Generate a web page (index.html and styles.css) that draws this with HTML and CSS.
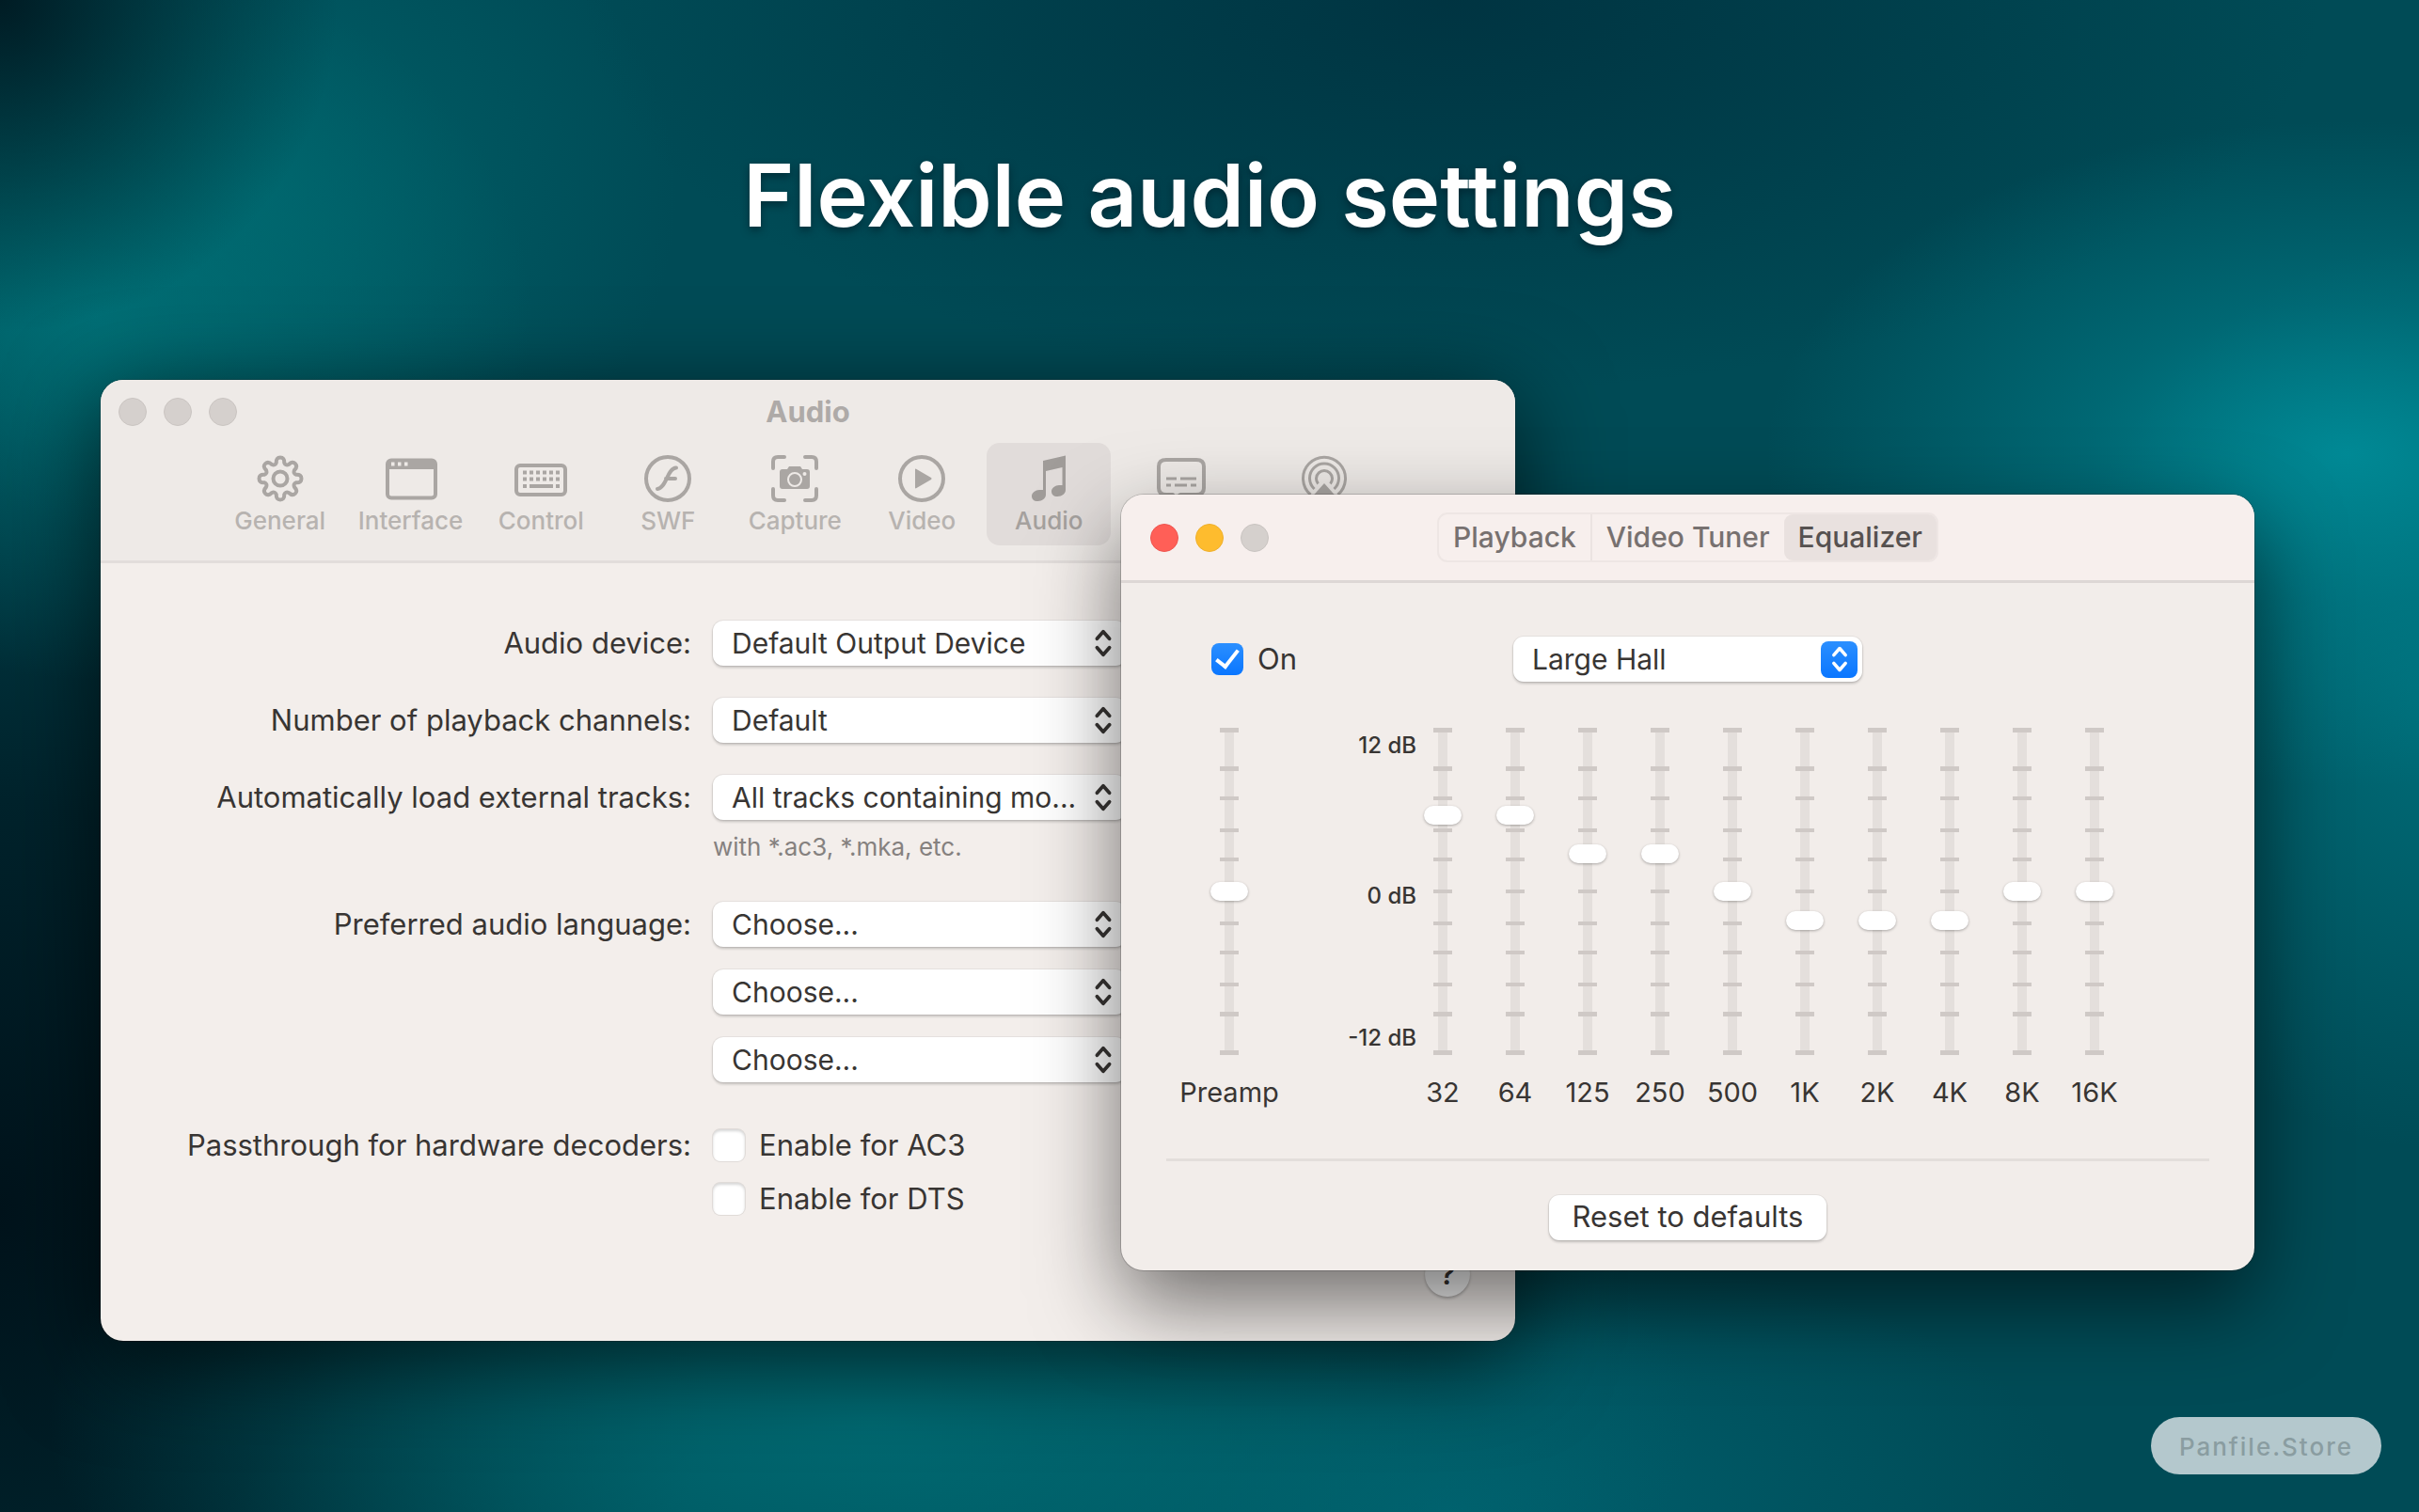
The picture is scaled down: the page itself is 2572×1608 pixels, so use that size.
FILE: index.html
```html
<!DOCTYPE html>
<html lang="en">
<head>
<meta charset="utf-8">
<title>Flexible audio settings</title>
<link rel="stylesheet" href="styles.css">
</head>
<body>
<svg class="sprite" aria-hidden="true">
  <symbol id="chevrons" viewBox="0 0 20 34">
    <path d="M3 12 10 4l7 8M3 22l7 8 7-8" fill="none" stroke="currentColor" stroke-width="4" stroke-linecap="round" stroke-linejoin="round"/>
  </symbol>
</svg>
<main class="desktop">
  <h1 class="headline">Flexible audio settings</h1>

  <section class="window prefs" aria-label="Audio preferences">
    <header class="prefs-header">
      <div class="titlebar">
        <div class="lights"><span class="light"></span><span class="light"></span><span class="light"></span></div>
        <h2 class="window-title">Audio</h2>
      </div>
      <nav class="toolbar">
        <button class="tool" type="button">
          <svg class="tool-icon" viewBox="-26 -26 52 52"><path class="line" d="M17-4.2Q22.500-4.500 22.500 0T17 4.2Q13.500 5.500 15 9 19 13 15.900 15.900T9 15Q5.500 13.500 4.2 17 4.500 22.500 0 22.500T-4.2 17Q-5.500 13.500-9 15-13 19-15.900 15.900T-15 9Q-13.500 5.500-17 4.2-22.500 4.500-22.500 0T-17-4.2Q-13.500-5.500-15-9-19-13-15.900-15.900T-9-15Q-5.500-13.500-4.2-17-4.500-22.500 0-22.500T4.2-17Q5.500-13.500 9-15 13-19 15.900-15.900T15-9Q13.500-5.500 17-4.2Z"/><circle class="line" r="7.5"/></svg>
          General
        </button>
        <button class="tool" type="button">
          <svg class="tool-icon wide" viewBox="-30 -26 60 52"><rect class="line" x="-25" y="-19.500" width="51" height="40" rx="4"/><path class="solid" d="M-25-19H26V-10H-25Z"/><path class="hole" d="M-21-17.500h3.500v4h-3.500zM-14-17.500h3.500v4h-3.500zM-7-17.500h3.500v4h-3.500z"/></svg>
          Interface
        </button>
        <button class="tool" type="button">
          <svg class="tool-icon wide" viewBox="-30 -26 60 52"><rect class="line" x="-26" y="-14" width="52" height="31" rx="4"/><path class="solid" d="M-19-8.500h4v4h-4zM-12-8.500h4v4h-4zM-5-8.500h4v4h-4zM2-8.500h4v4h-4zM9-8.500h4v4h-4zM16-8.500h4v4h-4zM-19-1.500h4v4h-4zM-12-1.500h4v4h-4zM-5-1.500h4v4h-4zM2-1.500h4v4h-4zM9-1.500h4v4h-4zM16-1.500h4v4h-4zM-19 6h4v4h-4zM-12 6h25v4h-25zM16 6h4v4h-4z"/></svg>
          Control
        </button>
        <button class="tool" type="button">
          <svg class="tool-icon" viewBox="-26 -26 52 52"><circle class="line" r="23"/><path class="line" stroke-linecap="round" d="M-11 11C-1 10-1-11 9-11.500M-2 0H8"/></svg>
          SWF
        </button>
        <button class="tool" type="button">
          <svg class="tool-icon" viewBox="-26 -26 52 52"><path class="line" stroke-linecap="round" d="M-23-11V-18Q-23-23-18-23H-11M11-23H18Q23-23 23-18V-11M23 11V18Q23 23 18 23H11M-11 23H-18Q-23 23-23 18V11"/><path class="solid" d="M-13-10h5l2-3H6l2 3h5q3 0 3 3V8q0 3-3 3H-13q-3 0-3-3V-7q0-3 3-3Z"/><circle cy="1" r="7" class="ring"/><circle class="hole" cx="10.500" cy="-5" r="2"/></svg>
          Capture
        </button>
        <button class="tool" type="button">
          <svg class="tool-icon" viewBox="-26 -26 52 52"><circle class="line" r="23"/><path class="solid" d="M-7-9.500Q-7-11-5.500-10L10-1Q11 0 10 1L-5.500 10Q-7 11-7 9.500Z"/></svg>
          Video
        </button>
        <button class="tool selected" type="button">
          <svg class="tool-icon" viewBox="-26 -26 52 52"><path class="solid" d="M-6-19 18-24.500V12C18 16 14 19 9.500 19S3 17 3 13.500 7 7 11 7H14.500V-12L-3-8V17C-3 21-7 24-11.500 24S-18 22-18 18.500-14 12-10 12H-6Z"/></svg>
          Audio
        </button>
        <button class="tool" type="button" aria-label="Subtitles">
          <svg class="tool-icon subtitles" viewBox="-30 -26 60 52"><path class="line" d="M-9 17H-16Q-24 17-24 10V-13Q-24-20-16-20H16Q24-20 24-13V10Q24 17 16 17H-1L-8 23Z"/><path class="thin" d="M-16 0h11M-1 0h17M-16 7h5M-7 7h13M10 7h6"/></svg>
        </button>
        <button class="tool" type="button" aria-label="AirPlay">
          <svg class="tool-icon airplay" viewBox="-26 -26 52 52"><path class="ring-line" d="M-14.500 17A22.500 22.500 0 1 1 14.500 17M-10.500 11A15.500 15.500 0 1 1 10.500 11M-6.500 5.500A8.500 8.500 0 1 1 6.500 5.500"/><path class="solid" d="M0 5 17 24H-17Z"/></svg>
        </button>
      </nav>
    </header>
    <form class="settings">
      <label class="caption" for="device">Audio device:</label>
      <span class="picker"><select id="device"><option>Default Output Device</option></select><svg class="picker-arrows"><use href="#chevrons"/></svg></span>

      <label class="caption" for="channels">Number of playback channels:</label>
      <span class="picker"><select id="channels"><option>Default</option></select><svg class="picker-arrows"><use href="#chevrons"/></svg></span>

      <label class="caption" for="tracks">Automatically load external tracks:</label>
      <div class="tracks">
        <span class="picker"><select id="tracks"><option>All tracks containing mo...</option></select><svg class="picker-arrows"><use href="#chevrons"/></svg></span>
        <p class="hint">with *.ac3, *.mka, etc.</p>
      </div>

      <label class="caption" for="lang1">Preferred audio language:</label>
      <div class="languages">
        <span class="picker"><select id="lang1"><option>Choose...</option></select><svg class="picker-arrows"><use href="#chevrons"/></svg></span>
        <span class="picker"><select aria-label="Second language"><option>Choose...</option></select><svg class="picker-arrows"><use href="#chevrons"/></svg></span>
        <span class="picker"><select aria-label="Third language"><option>Choose...</option></select><svg class="picker-arrows"><use href="#chevrons"/></svg></span>
      </div>

      <span class="caption">Passthrough for hardware decoders:</span>
      <div class="decoders">
        <label class="check"><input type="checkbox">Enable for AC3</label>
        <label class="check"><input type="checkbox">Enable for DTS</label>
      </div>
    </form>
    <footer class="prefs-footer"><button class="help" type="button">?</button></footer>
  </section>

  <section class="window tuner" aria-label="Equalizer">
    <header class="tuner-header">
      <div class="lights"><span class="light close"></span><span class="light minimize"></span><span class="light"></span></div>
      <nav class="tabs">
        <button class="tab" type="button">Playback</button>
        <button class="tab" type="button">Video Tuner</button>
        <button class="tab current" type="button">Equalizer</button>
      </nav>
    </header>
    <form class="equalizer">
      <div class="preset">
        <label class="check"><input type="checkbox" checked>On</label>
        <span class="picker"><select aria-label="Preset"><option>Large Hall</option></select><span class="picker-badge"><svg><use href="#chevrons"/></svg></span></span>
      </div>
      <div class="board">
        <label class="band preamp"><input type="range" min="-12" max="12" step="any" value="0">Preamp</label>
        <div class="scale"><span>12 dB</span><span>0 dB</span><span>-12 dB</span></div>
        <div class="bands">
          <label class="band"><input type="range" min="-12" max="12" step="any" value="5.900">32</label>
          <label class="band"><input type="range" min="-12" max="12" step="any" value="5.900">64</label>
          <label class="band"><input type="range" min="-12" max="12" step="any" value="2.900">125</label>
          <label class="band"><input type="range" min="-12" max="12" step="any" value="2.900">250</label>
          <label class="band"><input type="range" min="-12" max="12" step="any" value="0">500</label>
          <label class="band"><input type="range" min="-12" max="12" step="any" value="-2.300">1K</label>
          <label class="band"><input type="range" min="-12" max="12" step="any" value="-2.300">2K</label>
          <label class="band"><input type="range" min="-12" max="12" step="any" value="-2.300">4K</label>
          <label class="band"><input type="range" min="-12" max="12" step="any" value="0">8K</label>
          <label class="band"><input type="range" min="-12" max="12" step="any" value="0">16K</label>
        </div>
      </div>
      <hr class="divider">
      <button class="reset" type="reset">Reset to defaults</button>
    </form>
  </section>

  <a class="store" href="#">Panfile.Store</a>
</main>
</body>
</html>
```

FILE: styles.css
```css
* {
  box-sizing: border-box;
}

body {
  margin: 0;
  font: 400 31px/36px Inter, "Liberation Sans", sans-serif;
  color: #383533;
}

button,
select,
input {
  margin: 0;
  font: inherit;
  color: inherit;
}

.sprite {
  display: none;
}

.desktop {
  position: relative;
  min-height: 100vh;
  overflow: hidden;
  background:
    radial-gradient(ellipse 24% 22% at 97% 30%, rgba(0, 142, 154, 0.9), rgba(0, 132, 144, 0.5) 45%, transparent),
    radial-gradient(ellipse 16% 30% at 101% 46%, rgba(0, 124, 136, 0.7), transparent),
    radial-gradient(ellipse 14% 22% at 0% 0%, rgba(0, 22, 30, 0.9), rgba(0, 24, 32, 0.5) 45%, transparent),
    radial-gradient(ellipse 18% 24% at 10% 13%, rgba(0, 112, 118, 0.6), transparent),
    radial-gradient(ellipse 18% 24% at 4% 21%, rgba(0, 118, 124, 0.8), rgba(0, 112, 118, 0.45) 45%, transparent),
    radial-gradient(ellipse 36% 26% at 60% 0%, rgba(0, 48, 62, 0.85), rgba(0, 48, 62, 0.45) 50%, transparent),
    radial-gradient(ellipse 34% 24% at 36% 94%, rgba(0, 108, 116, 0.9), rgba(0, 102, 110, 0.6) 45%, transparent),
    radial-gradient(ellipse 26% 18% at 60% 100%, rgba(0, 98, 112, 0.9), transparent),
    radial-gradient(ellipse 30% 60% at 0% 80%, rgba(0, 16, 24, 0.95), rgba(0, 18, 26, 0.7) 45%, transparent),
    #004b56;
}

.headline {
  margin: 0;
  padding-top: 150px;
  font-size: 92px;
  line-height: 116px;
  font-weight: 600;
  text-align: center;
  color: #fff;
  text-shadow: 0 4px 8px rgba(0, 20, 30, 0.5);
}

.window {
  position: absolute;
  border-radius: 24px;
  overflow: hidden;
}

.prefs {
  left: 107px;
  top: 404px;
  width: 1504px;
  background: #f3eeeb;
  box-shadow: 0 0 0 1px rgba(0, 0, 0, 0.15), 0 20px 100px rgba(0, 0, 0, 0.65);
}

.tuner {
  left: 1192px;
  top: 526px;
  width: 1205px;
  background: #f2edea;
  box-shadow: 0 0 0 1px rgba(0, 0, 0, 0.18), 0 36px 90px rgba(0, 0, 0, 0.55);
}

.lights {
  display: flex;
  gap: 18px;
}

.light {
  width: 30px;
  height: 30px;
  border: 1px solid #c9c4c1;
  border-radius: 50%;
  background: #d5d0cd;
}

.light.close {
  border-color: #ee5550;
  background: #ff5f57;
}

.light.minimize {
  border-color: #efb02c;
  background: #febc2e;
}

.prefs-header {
  padding-bottom: 16px;
  border-bottom: 3px solid #e2dddb;
  background: #eeeae7;
}

.titlebar {
  display: grid;
  grid-template-columns: 1fr auto 1fr;
  align-items: center;
  height: 67px;
  padding: 0 19px;
}

.window-title {
  margin: 0;
  font-size: 31px;
  line-height: 36px;
  font-weight: 700;
  color: #aeaaa8;
}

.toolbar {
  display: flex;
  justify-content: center;
  gap: 3px;
  height: 109px;
  padding-right: 1px;
}

.tool {
  display: flex;
  flex-direction: column;
  align-items: center;
  min-width: 132px;
  padding: 12px 14px 0;
  border: 0;
  border-radius: 14px;
  background: none;
  font-size: 26px;
  line-height: 38px;
  font-weight: 500;
  color: #b7b3b0;
}

.tool.selected {
  background: #e1dcda;
  color: #a5a19e;
}

.tool-icon {
  width: 52px;
  height: 52px;
  color: #aaa6a3;
}

.tool-icon.wide {
  width: 60px;
}

.tool-icon.subtitles {
  width: 60px;
  margin: 0 28px;
}

.tool-icon.airplay {
  margin: 0 37px;
}

.tool.selected .tool-icon {
  color: #a09c99;
}

.line {
  fill: none;
  stroke: currentColor;
  stroke-width: 4;
  stroke-linejoin: round;
}

.ring-line,
.thin {
  fill: none;
  stroke: currentColor;
  stroke-width: 3;
}

.solid {
  fill: currentColor;
}

.hole {
  fill: #eeeae7;
}

.ring {
  fill: none;
  stroke: #eeeae7;
  stroke-width: 2;
}

.settings {
  display: grid;
  grid-template-columns: 628px 439px;
  column-gap: 23px;
  row-gap: 34px;
  padding-top: 61px;
}

.caption {
  line-height: 48px;
  text-align: right;
}

.picker {
  display: grid;
  height: 48px;
}

.picker select {
  grid-area: 1 / 1;
  width: 100%;
  height: 48px;
  padding: 0 20px;
  border: 0;
  border-radius: 11px;
  appearance: none;
  background: #fff;
  box-shadow: 0 0 0 1px rgba(0, 0, 0, 0.05), 0 2px 3px rgba(0, 0, 0, 0.2);
  font-size: 30px;
}

.picker-arrows {
  grid-area: 1 / 1;
  align-self: center;
  justify-self: end;
  width: 20px;
  height: 32px;
  margin-right: 14px;
  pointer-events: none;
}

.tracks {
  padding-bottom: 6px;
}

.hint {
  margin: 11px 0 0;
  font-size: 26px;
  color: #85817f;
}

.languages {
  display: grid;
  gap: 24px;
  padding-bottom: 9px;
}

.decoders {
  display: grid;
  gap: 9px;
}

.check {
  display: flex;
  align-items: center;
  gap: 15px;
  height: 48px;
}

.check input {
  display: grid;
  place-items: center;
  width: 34px;
  height: 34px;
  border-radius: 8px;
  appearance: none;
  background: #fff;
  box-shadow: inset 0 2px 3px rgba(0, 0, 0, 0.16), 0 0 0 1px rgba(0, 0, 0, 0.08);
}

.check input:checked {
  background: linear-gradient(#2b8fff, #0a76ff);
  box-shadow: none;
}

.check input:checked::after {
  content: "";
  width: 10px;
  height: 20px;
  margin-bottom: 6px;
  border: solid #fff;
  border-width: 0 4px 4px 0;
  transform: rotate(38deg);
}

.prefs-footer {
  display: flex;
  justify-content: flex-end;
  padding: 32px 48px 47px;
}

.help {
  width: 48px;
  height: 48px;
  padding: 0;
  border: 0;
  border-radius: 50%;
  background: #fff;
  box-shadow: 0 2px 3px rgba(0, 0, 0, 0.25);
  font-weight: 600;
}

.tuner-header {
  display: grid;
  grid-template-columns: 1fr auto 1fr;
  align-items: center;
  height: 94px;
  padding: 0 31px;
  border-bottom: 3px solid #ddd7d5;
  background: #f7efed;
}

.tabs {
  display: flex;
  height: 53px;
  border: 2px solid #eee6e4;
  border-radius: 11px;
}

.tab {
  padding: 0 15px 2px;
  border: 0;
  background: none;
  color: #777170;
  font-size: 30px;
  font-weight: 500;
}

.tab + .tab:not(.current) {
  border-left: 2px solid #ebe3e1;
}

.tab.current {
  border-radius: 9px;
  background: #e9e1df;
  color: #565150;
}

.equalizer {
  display: flex;
  flex-direction: column;
  align-items: center;
  padding: 57px 48px 32px;
}

.preset {
  display: grid;
  grid-template-columns: 1fr 371px 1fr;
  width: 100%;
  padding-left: 48px;
  padding-right: 48px;
}

.picker-badge {
  grid-area: 1 / 1;
  display: grid;
  place-items: center;
  align-self: center;
  justify-self: end;
  width: 39px;
  height: 39px;
  margin-right: 5px;
  border-radius: 8px;
  background: linear-gradient(#2b8fff, #0a76ff);
  color: #fff;
  pointer-events: none;
}

.picker-badge svg {
  width: 18px;
  height: 30px;
}

.board {
  display: flex;
  align-self: flex-start;
  margin-top: 49px;
  padding-left: 16px;
}

.band {
  display: flex;
  flex-direction: column;
  align-items: center;
  gap: 22px;
  width: 54px;
  font-size: 29px;
}

.band.preamp {
  width: 102px;
}

.band input {
  width: 40px;
  height: 348px;
  appearance: none;
  writing-mode: vertical-lr;
  direction: rtl;
  background:
    linear-gradient(
      #cfc9c6 5px, transparent 5px 41px,
      #cfc9c6 41px 46px, transparent 46px 73px,
      #cfc9c6 73px 77px, transparent 77px 107px,
      #cfc9c6 107px 111px, transparent 111px 138px,
      #cfc9c6 138px 142px, transparent 142px 172px,
      #cfc9c6 172px 176px, transparent 176px 206px,
      #cfc9c6 206px 210px, transparent 210px 237px,
      #cfc9c6 237px 241px, transparent 241px 271px,
      #cfc9c6 271px 275px, transparent 275px 302px,
      #cfc9c6 302px 307px, transparent 307px 343px,
      #cfc9c6 343px) center / 20px 100% no-repeat,
    linear-gradient(#e4dfdc, #e4dfdc) center / 10px 100% no-repeat;
}

.band input::-webkit-slider-thumb {
  appearance: none;
  width: 40px;
  height: 20px;
  border-radius: 10px;
  background: #fff;
  box-shadow: 0 1px 3px rgba(0, 0, 0, 0.3);
}

.scale {
  display: grid;
  grid-template-rows: 160px 151px 36px;
  width: 148px;
  padding-top: 1px;
  font-size: 24px;
  font-weight: 500;
  text-align: right;
}

.bands {
  display: flex;
  gap: 23px;
  padding-left: 1px;
}

.divider {
  width: 100%;
  height: 3px;
  margin: 52px 0 36px;
  border: 0;
  background: #e3dedb;
}

.reset {
  height: 48px;
  padding: 0 25px 2px;
  border: 0;
  border-radius: 11px;
  background: #fff;
  box-shadow: 0 0 0 1px rgba(0, 0, 0, 0.05), 0 2px 3px rgba(0, 0, 0, 0.2);
}

.store {
  position: absolute;
  right: 40px;
  bottom: 40px;
  padding: 2px 30px 0;
  border-radius: 31px;
  background: #b4c8cd;
  font-size: 26px;
  line-height: 59px;
  font-weight: 500;
  letter-spacing: 2px;
  color: #8a9da1;
  text-decoration: none;
}
```
